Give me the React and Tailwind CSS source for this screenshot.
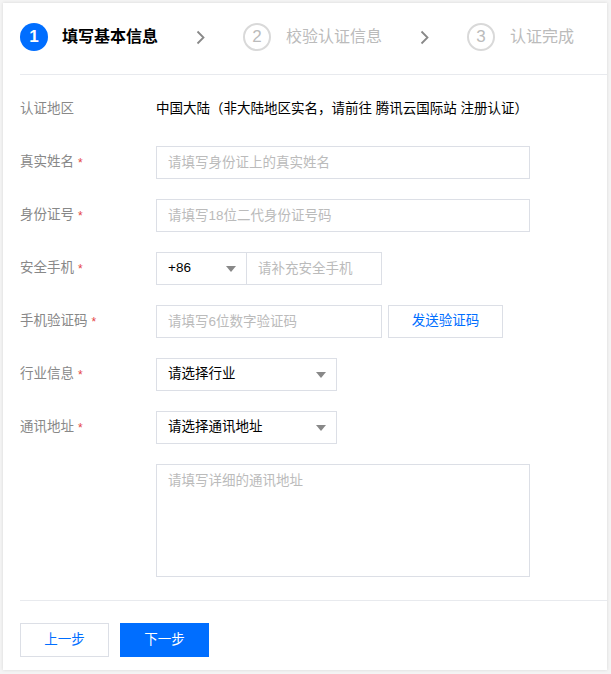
import React from "react";

const FONT = { fontFamily: "'Liberation Sans', 'Noto Sans CJK SC', sans-serif" };

function Chevron() {
  return (
    <svg width="9" height="15" viewBox="0 0 9 15" className="mx-[38px] shrink-0">
      <path d="M1.5 1.5 L7.5 7.5 L1.5 13.5" fill="none" stroke="#888" strokeWidth="1.8" />
    </svg>
  );
}

function Caret() {
  return (
    <svg width="10" height="6" viewBox="0 0 10 6" className="shrink-0">
      <path d="M0 0 H10 L5 6 Z" fill="#888" />
    </svg>
  );
}

function Label({ text, required }) {
  return (
    <div className="w-[136px] shrink-0 text-[13.5px] text-[#888] flex items-center">
      <span>{text}</span>
      {required && <span className="ml-[4px] text-[#e54545] text-[12px]">*</span>}
    </div>
  );
}

function Row({ label, required, children, tall }) {
  return (
    <div className={`flex ${tall ? "items-start" : "items-center h-[33px]"}`}>
      <Label text={label} required={required} />
      {children}
    </div>
  );
}

const inputCls =
  "h-[33px] border border-[#dcdfe6] px-[11px] text-[13.5px] text-black outline-none placeholder:text-[#bbb] bg-white";

export default function App() {
  return (
    <div className="w-[611px] h-[674px] bg-[#f4f4f4] pt-[3px] pl-[3px] pr-[4px] pb-[4px]" style={FONT}>
      <div className="bg-white w-[604px] h-[667px] shadow-[0_0_3px_rgba(0,0,0,0.12)] pl-[17px] flex flex-col">
        {/* steps */}
        <div className="flex items-center pt-[20px] pb-[23px]">
          <div className="flex items-center">
            <div className="w-[28px] h-[28px] rounded-full bg-[#006eff] text-white flex items-center justify-center text-[17px] font-bold">
              1
            </div>
            <span className="ml-[14px] text-[16px] font-bold text-black">填写基本信息</span>
          </div>
          <Chevron />
          <div className="flex items-center">
            <div className="w-[28px] h-[28px] rounded-full border-2 border-[#d9d9d9] text-[#bbb] flex items-center justify-center text-[17px]">
              2
            </div>
            <span className="ml-[15px] text-[16px] text-[#bbb]">校验认证信息</span>
          </div>
          <Chevron />
          <div className="flex items-center">
            <div className="w-[28px] h-[28px] rounded-full border-2 border-[#d9d9d9] text-[#bbb] flex items-center justify-center text-[17px]">
              3
            </div>
            <span className="ml-[15px] text-[16px] text-[#bbb]">认证完成</span>
          </div>
        </div>
        <div className="h-px bg-[#e8eaee]" />

        {/* form */}
        <div className="flex flex-col gap-[20px] pt-[18px] pb-[23px]">
          <Row label="认证地区">
            <span className="text-[13.5px] text-black">
              中国大陆（非大陆地区实名，请前往 腾讯云国际站 注册认证）
            </span>
          </Row>
          <Row label="真实姓名" required>
            <input className={`${inputCls} w-[374px]`} placeholder="请填写身份证上的真实姓名" />
          </Row>
          <Row label="身份证号" required>
            <input className={`${inputCls} w-[374px]`} placeholder="请填写18位二代身份证号码" />
          </Row>
          <Row label="安全手机" required>
            <div className="flex">
              <div className="w-[91px] h-[33px] border border-[#dcdfe6] flex items-center justify-between pl-[11px] pr-[10px] text-[13.5px] text-black">
                <span>+86</span>
                <Caret />
              </div>
              <input className={`${inputCls} w-[135px] border-l-0`} placeholder="请补充安全手机" />
            </div>
          </Row>
          <Row label="手机验证码" required>
            <input className={`${inputCls} w-[226px]`} placeholder="请填写6位数字验证码" />
            <button className="ml-[6px] w-[115px] h-[33px] border border-[#dcdfe6] bg-white text-[13.5px] text-[#006eff]">
              发送验证码
            </button>
          </Row>
          <Row label="行业信息" required>
            <div className="w-[181px] h-[33px] border border-[#dcdfe6] flex items-center justify-between pl-[11px] pr-[10px] text-[13.5px] text-black">
              <span>请选择行业</span>
              <Caret />
            </div>
          </Row>
          <Row label="通讯地址" required>
            <div className="w-[181px] h-[33px] border border-[#dcdfe6] flex items-center justify-between pl-[11px] pr-[10px] text-[13.5px] text-black">
              <span>请选择通讯地址</span>
              <Caret />
            </div>
          </Row>
          <div className="flex">
            <div className="w-[136px] shrink-0" />
            <textarea
              className="w-[374px] h-[113px] border border-[#dcdfe6] px-[11px] py-[6px] text-[13.5px] outline-none resize-none placeholder:text-[#bbb]"
              placeholder="请填写详细的通讯地址"
            />
          </div>
        </div>
        <div className="h-px bg-[#e8eaee]" />

        {/* footer */}
        <div className="flex items-center gap-[11px] pt-[22px]">
          <button className="w-[89px] h-[34px] border border-[#dcdfe6] bg-white text-[13.5px] text-[#006eff]">
            上一步
          </button>
          <button className="w-[89px] h-[34px] bg-[#006eff] text-[13.5px] text-white">下一步</button>
        </div>
      </div>
    </div>
  );
}
